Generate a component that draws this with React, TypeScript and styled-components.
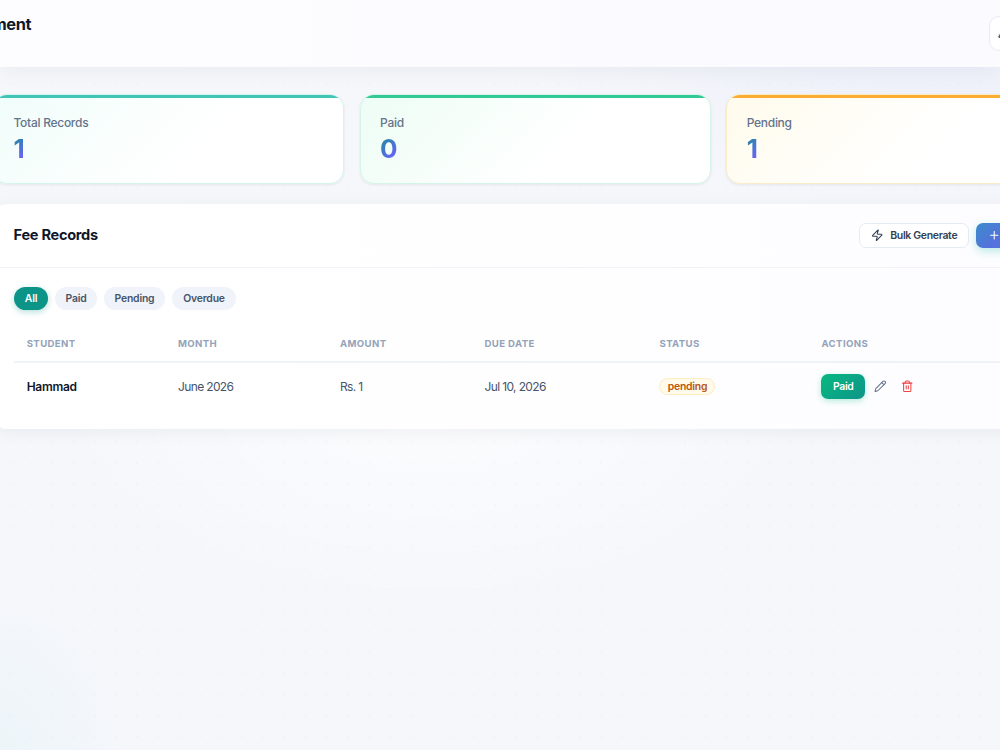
import React from "react";
import styled, { createGlobalStyle } from "styled-components";
import { Zap, Pencil, Trash2, Plus, Bell } from "lucide-react";

const GlobalStyle = createGlobalStyle`
  * { box-sizing: border-box; }
  body {
    margin: 0;
    font-family: Inter, "Open Sans", sans-serif;
    color: #0f172a;
    overflow: hidden;
  }
  button { font-family: inherit; border: 0; margin: 0; padding: 0; }
`;

const Page = styled.div`
  width: 1000px;
  height: 750px;
  overflow: hidden;
  background:
    radial-gradient(circle at 50% 50%, rgba(15, 23, 42, 0.02) 0.9px, transparent 1.2px) 0 9.7px / 21.09px 21.09px,
    radial-gradient(ellipse 190px 240px at 0% 100%, rgba(20, 184, 200, 0.035), transparent 70%),
    radial-gradient(ellipse 600px 300px at 95% 0%, rgba(99, 102, 241, 0.06), transparent 75%),
    radial-gradient(ellipse 480px 260px at 430px 400px, rgba(255, 255, 255, 0.7), transparent 80%),
    #f5f7fb;
`;

const Header = styled.header`
  display: flex;
  justify-content: space-between;
  height: 67px;
  background: linear-gradient(90deg, #fdfdff, #fafaff);
  box-shadow: 0 4px 22px rgba(15, 23, 42, 0.05);
`;

const TitleClip = styled.div`
  display: flex;
  justify-content: flex-end;
  width: 31px;
  padding-top: 13px;
`;

const PageTitle = styled.h1`
  margin: 0;
  font-size: 16.4px;
  line-height: 22px;
  font-weight: 700;
  letter-spacing: -0.45px;
  flex: none;
`;

const BellButton = styled.button`
  display: flex;
  align-items: center;
  justify-content: center;
  flex: none;
  width: 32px;
  height: 35px;
  margin: 16px -21px 0 0;
  border: 1px solid #e6ecf4;
  border-radius: 10px;
  background: #fff;
  color: #475569;
`;

const Stats = styled.section`
  display: grid;
  grid-template-columns: repeat(3, 351px);
  gap: 15.6px;
  margin: 27px 0 0 -7px;
`;

const StatCard = styled.article<{ $accent: string; $tint: string; $line: string }>`
  height: 90px;
  border: 1px solid ${(p) => p.$line};
  border-radius: 14px;
  overflow: hidden;
  background: linear-gradient(135deg, ${(p) => p.$tint}, #fff 60%);
  box-shadow: 0 1px 3px rgba(15, 23, 42, 0.08);
  &::before {
    content: "";
    display: block;
    height: 3px;
    background: ${(p) => p.$accent};
  }
`;

const StatBody = styled.div`
  display: flex;
  flex-direction: column;
  align-items: flex-start;
  padding: 16px 19.5px;
`;

const StatLabel = styled.span`
  font-size: 12px;
  line-height: 18px;
  font-weight: 500;
  color: #64748b;
  letter-spacing: -0.28px;
`;

const StatValue = styled.strong`
  font-size: 26px;
  line-height: 34px;
  font-weight: 700;
  letter-spacing: -0.5px;
  background: linear-gradient(135deg, #0d9488, #6366f1 70%, #7c5cfa);
  background-clip: text;
  color: transparent;
`;

const Panel = styled.section`
  width: 1085px;
  height: 225px;
  margin: 20px 0 0 -7px;
  border-radius: 14px;
  background: linear-gradient(90deg, #fff, #fdfdff);
  box-shadow: 0 3px 18px rgba(15, 23, 42, 0.055);
`;

const PanelHeader = styled.div`
  display: flex;
  align-items: center;
  width: 1085px;
  height: 63.5px;
  padding: 0 0 0 20.6px;
  border-bottom: 1px solid #f0f3f8;
`;

const PanelTitle = styled.h2`
  width: 845.4px;
  margin: 0;
  font-size: 14.6px;
  font-weight: 650;
  letter-spacing: -0.3px;
`;

const BulkButton = styled.button`
  display: flex;
  align-items: center;
  justify-content: center;
  gap: 7px;
  flex: none;
  width: 110px;
  height: 25px;
  border: 1px solid #e5ebf3;
  border-radius: 7px;
  background: #fff;
  color: #334155;
  font-size: 10.5px;
  font-weight: 600;
  letter-spacing: -0.33px;
`;

const AddButton = styled.button`
  display: flex;
  align-items: center;
  flex: none;
  width: 96px;
  height: 25px;
  margin-left: 6.6px;
  padding-left: 12px;
  border-radius: 7px;
  background: linear-gradient(135deg, #3b8ccb, #5472dc 30%, #6366f1);
  box-shadow: 0 3px 10px rgba(20, 184, 166, 0.3);
  color: #fff;
`;

const Filters = styled.div`
  display: flex;
  gap: 7px;
  padding: 19.5px 0 0 21px;
`;

const Chip = styled.button<{ $width: number; $active?: boolean }>`
  width: ${(p) => p.$width}px;
  height: 23px;
  border-radius: 12px;
  background: ${(p) => (p.$active ? "#0d9488" : "#f0f3f9")};
  color: ${(p) => (p.$active ? "#fff" : "#475569")};
  box-shadow: ${(p) => (p.$active ? "0 2px 6px rgba(13, 148, 136, 0.3)" : "none")};
  font-size: 10.4px;
  font-weight: 600;
  letter-spacing: -0.2px;
`;

const Table = styled.div`
  margin: 16px 0 0 21px;
`;

const Row = styled.div<{ $head?: boolean }>`
  display: grid;
  grid-template-columns: 151.3px 162px 144.5px 175px 162px 1fr;
  align-items: center;
  height: ${(p) => (p.$head ? 37 : 47)}px;
  padding-left: 12.7px;
  border-bottom: ${(p) => (p.$head ? "2px solid #eff3f8" : "0")};
`;

const HeadCell = styled.span`
  font-size: 9.6px;
  font-weight: 650;
  letter-spacing: 0.38px;
  color: #94a3b8;
  text-transform: uppercase;
`;

const Cell = styled.span<{ $strong?: boolean }>`
  font-size: 12px;
  font-weight: ${(p) => (p.$strong ? 600 : 400)};
  letter-spacing: ${(p) => (p.$strong ? -0.3 : -0.63)}px;
  color: ${(p) => (p.$strong ? "#0f172a" : "#475569")};
`;

const Badge = styled.span`
  display: flex;
  align-items: center;
  justify-content: center;
  width: 56px;
  height: 17px;
  border: 1px solid #fdecc0;
  border-radius: 9px;
  background: #fffaea;
  color: #b9560f;
  font-size: 10.4px;
  font-weight: 600;
  letter-spacing: -0.2px;
`;

const Actions = styled.div`
  display: flex;
  align-items: center;
`;

const PaidButton = styled.button`
  width: 43.5px;
  height: 24.5px;
  border-radius: 7px;
  background: linear-gradient(135deg, #08b981, #0d9488);
  box-shadow: 0 2px 6px rgba(16, 185, 129, 0.3);
  color: #fff;
  font-size: 10.4px;
  font-weight: 600;
  letter-spacing: -0.3px;
`;

const IconButton = styled.button<{ $color: string; $gap: number }>`
  display: flex;
  margin-left: ${(p) => p.$gap}px;
  background: none;
  color: ${(p) => p.$color};
`;

const columns = ["Student", "Month", "Amount", "Due Date", "Status", "Actions"];
const stats = [
  { label: "Total Records", value: 1, accent: "#40c4b6", tint: "#f0fdfa", line: "#d4f5ec" },
  { label: "Paid", value: 0, accent: "#32c997", tint: "#edfdf5", line: "#d4f5e7" },
  { label: "Pending", value: 1, accent: "#fbac32", tint: "#fffbec", line: "#fbecc8" },
];

export default function App() {
  return (
    <Page>
      <GlobalStyle />
      <Header>
        <TitleClip><PageTitle>Management</PageTitle></TitleClip>
        <BellButton aria-label="Notifications"><Bell size={16} /></BellButton>
      </Header>
      <Stats>
        {stats.map((s) => (
          <StatCard key={s.label} $accent={s.accent} $tint={s.tint} $line={s.line}>
            <StatBody>
              <StatLabel>{s.label}</StatLabel>
              <StatValue>{s.value}</StatValue>
            </StatBody>
          </StatCard>
        ))}
      </Stats>
      <Panel>
        <PanelHeader>
          <PanelTitle>Fee Records</PanelTitle>
          <BulkButton><Zap size={12.5} strokeWidth={2} />Bulk Generate</BulkButton>
          <AddButton aria-label="Add fee"><Plus size={12.5} /></AddButton>
        </PanelHeader>
        <Filters>
          <Chip $width={34} $active>All</Chip>
          <Chip $width={42}>Paid</Chip>
          <Chip $width={61}>Pending</Chip>
          <Chip $width={64}>Overdue</Chip>
        </Filters>
        <Table>
          <Row $head>{columns.map((c) => <HeadCell key={c}>{c}</HeadCell>)}</Row>
          <Row>
            <Cell $strong>Hammad</Cell>
            <Cell>June 2026</Cell>
            <Cell>Rs. 1</Cell>
            <Cell>Jul 10, 2026</Cell>
            <Badge>pending</Badge>
            <Actions>
              <PaidButton>Paid</PaidButton>
              <IconButton $color="#64748b" $gap={9} aria-label="Edit"><Pencil size={12.5} /></IconButton>
              <IconButton $color="#ef4444" $gap={15} aria-label="Delete"><Trash2 size={12.5} /></IconButton>
            </Actions>
          </Row>
        </Table>
      </Panel>
    </Page>
  );
}
